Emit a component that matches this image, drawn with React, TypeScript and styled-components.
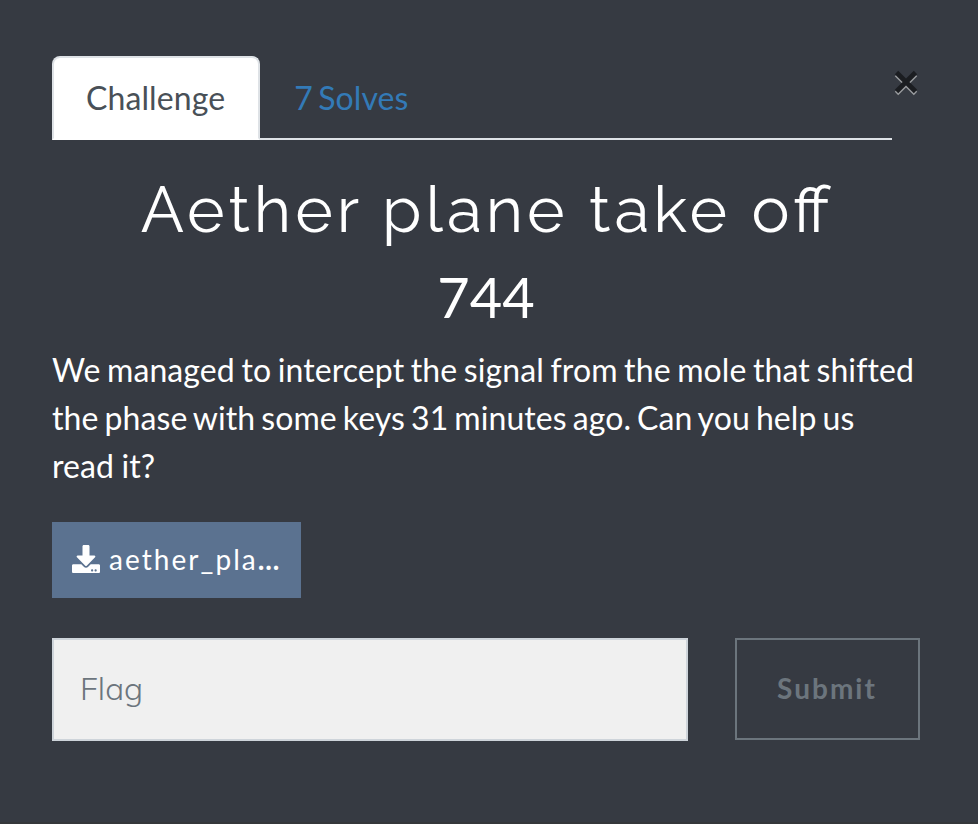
import React from "react";
import styled, { createGlobalStyle } from "styled-components";

const GlobalStyle = createGlobalStyle`
  * { box-sizing: border-box; }
  body { margin: 0; background: #363a42; font-family: Lato, sans-serif; color: #fff; }
`;
const Page = styled.main`
  height: 824px;
  padding: 56px 58px 0 52px;
  background: #363a42;
  border-bottom: 2px solid #35373a;
`;
const Top = styled.header`
  display: flex;
  height: 84px;
`;
const Tabs = styled.nav`
  display: flex;
  width: 840px;
  border-bottom: 2px solid #dee2e6;
`;
const Tab = styled.button<{ $active?: boolean }>`
  height: 84px;
  padding: 0 33px 0 32px;
  border: 2px solid;
  border-color: ${p => (p.$active ? "#dee2e6 #dee2e6 #fff" : "transparent")};
  border-radius: 8px 8px 0 0;
  background: ${p => (p.$active ? "#fff" : "transparent")};
  color: ${p => (p.$active ? "#495057" : "#337ab7")};
  font: 32px/48px Lato, sans-serif;
  letter-spacing: 0.1px;
  word-spacing: -3px;
  white-space: nowrap;
`;
const Close = styled.button`
  width: 28px;
  height: 30px;
  margin: 13px 0 0;
  padding: 0;
  border: 0;
  background: none;
`;
const Title = styled.h2`
  width: 868px;
  margin: 30px 0 0;
  padding-left: 3px;
  text-align: center;
  font: 400 64px/80px Raleway, Lato, sans-serif;
  letter-spacing: 4px;
  font-feature-settings: "liga" 1;
`;
const Points = styled.h3`
  width: 868px;
  margin: 7px 0 0;
  text-align: center;
  font: 400 56px/80px Lato, sans-serif;
`;
const Description = styled.p`
  margin: 9px 0 0;
  font: 32px/48px Lato, sans-serif;
  white-space: nowrap;
`;
const Line = styled.span<{ $wordGap: number }>`
  display: block;
  letter-spacing: 0.1px;
  word-spacing: ${p => p.$wordGap}px;
`;
const Download = styled.button`
  display: flex;
  align-items: center;
  gap: 9px;
  width: 249px;
  height: 76px;
  margin-top: 32px;
  padding: 0 18px 3px 20px;
  border: 0;
  background: #5b7290;
  color: #fff;
  font: 28px/42px Lato, sans-serif;
  letter-spacing: 2.05px;
  white-space: nowrap;
  svg { flex-shrink: 0; }
`;
const Ellipsis = styled.span`
  font-weight: 700;
`;
const Form = styled.form`
  display: flex;
  justify-content: space-between;
  width: 868px;
  margin-top: 40px;
`;
const Flag = styled.input`
  width: 636px;
  height: 103px;
  padding: 0 26px 4px;
  border: 2px solid #ced4da;
  border-radius: 0;
  background: #f0f0f0;
  font: 300 32px Mulish, Muli, "Nunito Sans", Nunito, sans-serif;
  &::placeholder { color: #6c757d; }
`;
const Submit = styled.button`
  width: 185px;
  height: 102px;
  padding: 0 7px 2px 6px;
  border: 2px solid #6c757d;
  background: transparent;
  color: #6c757d;
  font: 700 28px Lato, sans-serif;
  letter-spacing: 2px;
`;

export default function App() {
  return (
    <Page>
      <GlobalStyle />
      <Top>
        <Tabs><Tab $active>Challenge</Tab><Tab>7 Solves</Tab></Tabs>
        <Close aria-label="Close"><svg width="28" height="30" viewBox="0 0 28 30" fill="none" strokeWidth="4.8"><path d="M4.500 5.500 23.500 24.500M23.500 5.500 4.500 24.500" stroke="#9a9c9f" /><path d="M4.500 3.500 23.500 22.500M23.500 3.500 4.500 22.500" stroke="#1b1d21" /></svg></Close>
      </Top>
      <Title>Aether plane take off</Title>
      <Points>744</Points>
      <Description>
        <Line $wordGap={-1.75}>We managed to intercept the signal from the mole that shifted</Line>
        <Line $wordGap={-2.35}>the phase with some keys 31 minutes ago. Can you help us</Line>
        <Line $wordGap={-1}>read it?</Line>
      </Description>
      <Download><svg width="28" height="28" viewBox="0 0 512 512" fill="currentColor"><path d="M216 0h80c13.300 0 24 10.700 24 24v168h87.700c17.800 0 26.700 21.500 14.100 34.100L269.700 378.300c-7.500 7.500-19.800 7.500-27.300 0L90.100 226.100c-12.600-12.600-3.700-34.100 14.100-34.100H192V24c0-13.300 10.700-24 24-24zm296 376v112c0 13.300-10.700 24-24 24H24c-13.300 0-24-10.700-24-24V376c0-13.300 10.700-24 24-24h146.700l49 49c20.100 20.100 52.500 20.100 72.600 0l49-49H488c13.300 0 24 10.700 24 24zm-124 88c0-11-9-20-20-20s-20 9-20 20 9 20 20 20 20-9 20-20zm64 0c0-11-9-20-20-20s-20 9-20 20 9 20 20 20 20-9 20-20z" /></svg><span>aether_pla<Ellipsis>…</Ellipsis></span></Download>
      <Form><Flag placeholder="Flag" /><Submit type="button">Submit</Submit></Form>
    </Page>
  );
}
